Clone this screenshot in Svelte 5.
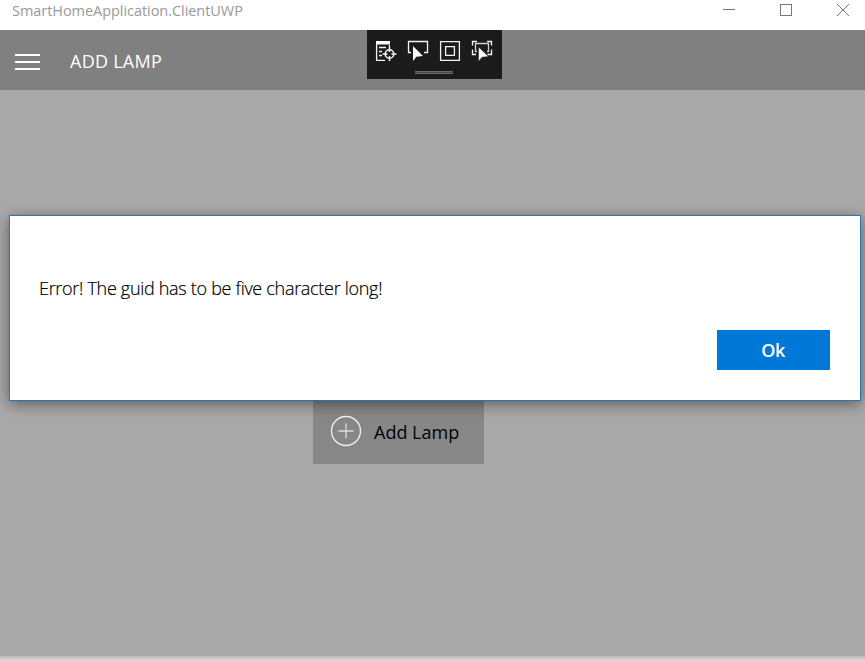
<script>
  let drawerOpen = $state(false);
</script>

<div class="window">
  <header class="titlebar">
    <span class="title">SmartHomeApplication.ClientUWP</span>
    <svg class="controls" width="144" height="30" viewBox="0 0 144 30" fill="none" stroke="#777" shape-rendering="crispEdges">
      <path d="M2 9.500h12M59.500 4.500h11v11h-11z" />
      <path d="M116 4l12 12M128 4l-12 12" shape-rendering="auto" />
    </svg>
  </header>

  <nav class="appbar">
    <button class="menu" aria-label="Menu" onclick={() => (drawerOpen = !drawerOpen)}>
      <i></i><i></i><i></i>
    </button>
    <h1>ADD LAMP</h1>
  </nav>

  <main>
    <button class="add">
      <svg width="32" height="32" viewBox="0 0 32 32" fill="none" stroke="#f2f2f2">
        <circle cx="16" cy="16" r="14.500" stroke-width="1.300" />
        <path d="M8.500 16h15M16 8.500v15" stroke="#ddd" stroke-width="1.300" />
      </svg>
      <span>Add Lamp</span>
    </button>
  </main>
  <div class="edge"></div>

  <div class="debug">
    <svg width="135" height="49" viewBox="0 0 135 49" fill="none" stroke="#f3f3f3" stroke-width="1.300">
      <path d="M9 11h14v3.500H9z" fill="#fff" stroke="none" />
      <path d="M9.600 14v16.400H18M22.400 15v2M12 17.500h7M12 21.500h3M12 25.500h3" />
      <circle cx="22.500" cy="24" r="4.300" stroke-width="1.600" />
      <path d="M22.500 17v5M22.500 26v5M15.500 24h5M24.500 24h5" stroke-width="1.500" />
      <path d="M44 22.500h-2.500v-11h19v11H57" />
      <path d="M46 16v15l3.500-4.300 6.500-.7z" fill="#fff" stroke="none" />
      <path d="M73.600 11.600h18.800v18.800H73.600zM78.600 16.600h8.800v8.800h-8.800z" />
      <path d="M110 11.500h-4.500v4M120 11.500h4.500v4M105.500 19.500v5h3.500M124.500 19.500v5h-4" />
      <path d="M110 21.500h-1.500v-8h13v8H120" stroke="#ccd5ce" />
      <path d="M111.500 17v14.500l3.500-4.300 6.500-.7z" fill="#fff" stroke="#1b1b1b" stroke-width=".5" />
      <path d="M48 42.500h38" stroke="#686868" stroke-width="3" />
      <path d="M48 42.500h38" stroke="#484848" stroke-width="1" />
    </svg>
  </div>

  <div class="dialog" role="alertdialog" aria-modal="true" aria-labelledby="message" tabindex="-1">
    <p id="message">Error! The guid has to be five character long!</p>
    <button class="ok">Ok</button>
  </div>
</div>

<style>
  .window {
    position: relative;
    display: flex;
    flex-direction: column;
    width: 865px;
    height: 661px;
    overflow: hidden;
    background: #a9a9a9;
    font-family: "Open Sans", "Noto Sans", sans-serif;
  }
  .window * { box-sizing: border-box; }
  button { border: 0; padding: 0; font: inherit; }
  .titlebar {
    display: flex;
    justify-content: space-between;
    flex: 0 0 30px;
    padding-left: 12px;
    background: #fff;
  }
  .title {
    color: #999;
    font-size: 14.5px;
    line-height: 22px;
    letter-spacing: -.05px;
    white-space: nowrap;
  }
  .appbar {
    display: flex;
    align-items: center;
    flex: 0 0 60px;
    padding-left: 15px;
    background: #808080;
    color: #fff;
  }
  .menu {
    display: flex;
    flex-direction: column;
    gap: 5px;
    width: 25px;
    margin: 3px 30px 0 0;
    background: none;
  }
  .menu i { height: 2px; background: #fff; }
  h1 {
    margin: 2px 0 0;
    font-size: 18px;
    line-height: 26px;
    font-weight: 400;
    letter-spacing: .25px;
    white-space: nowrap;
  }
  main { flex: 1; padding: 308px 0 0 313px; }
  .add {
    display: flex;
    align-items: center;
    width: 171px;
    height: 66px;
    padding: 0 0 1px 17px;
    gap: 12px;
    background: #878787;
    color: #000;
    font-size: 18px;
    white-space: nowrap;
  }
  .add span { padding-top: 2px; }
  .edge {
    flex: 0 0 5px;
    background: linear-gradient(#b8b8b8, #dedede);
  }
  .debug {
    position: absolute;
    left: 367px;
    top: 30px;
    width: 135px;
    height: 49px;
    background: #1b1b1b;
  }
  .debug svg { display: block; }
  .dialog {
    position: absolute;
    left: 9px;
    top: 215px;
    display: flex;
    flex-direction: column;
    width: 852px;
    height: 186px;
    padding: 60px 30px 30px 29px;
    border: 1px solid #2c75ae;
    outline: none;
    background: #fff;
    box-shadow: 0 3px 14px rgba(0, 0, 0, .45);
  }
  p {
    margin: -1px 0 0;
    color: #000;
    font-size: 18px;
    font-weight: 300;
    line-height: 26px;
    letter-spacing: -.3px;
    -webkit-text-stroke: .2px #000;
    white-space: nowrap;
  }
  .ok {
    align-self: flex-end;
    width: 113px;
    height: 40px;
    padding-right: 1px;
    margin-top: auto;
    background: #0078d7;
    color: #fff;
    font-size: 18px;
    font-weight: 600;
    letter-spacing: -.4px;
  }
</style>
